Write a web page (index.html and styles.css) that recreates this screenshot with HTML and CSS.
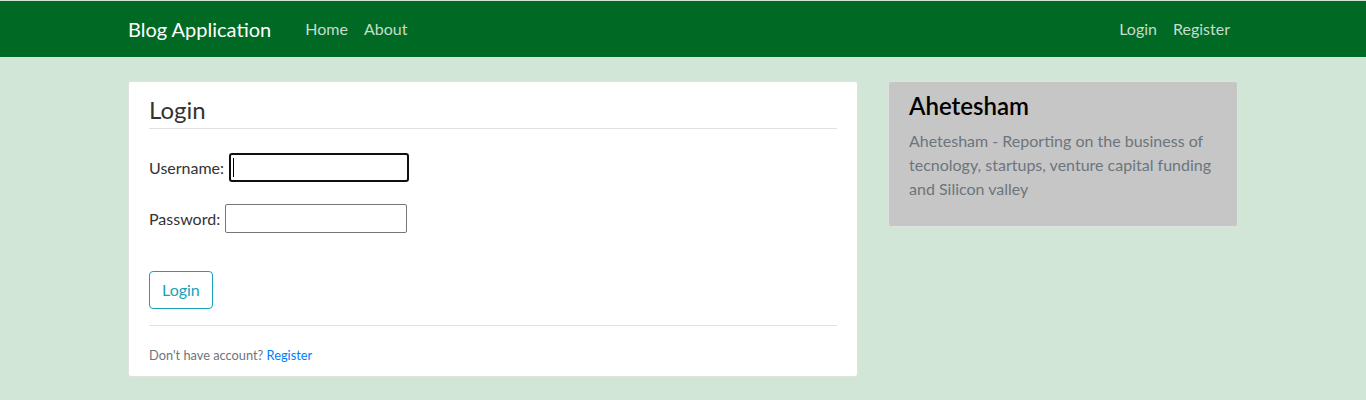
FILE: index.html
```html
<!DOCTYPE html>
<html lang="en">
<head>
<meta charset="utf-8">
<title>Blog Application - Login</title>
<link rel="stylesheet" href="styles.css">
</head>
<body>
<header class="site-header">
  <nav class="navbar">
    <div class="container nav-inner">
      <a class="brand" href="#">Blog Application</a>
      <div class="nav-left">
        <a class="nav-link" href="#">Home</a>
        <a class="nav-link" href="#">About</a>
      </div>
      <div class="nav-right">
        <a class="nav-link" href="#">Login</a>
        <a class="nav-link" href="#">Register</a>
      </div>
    </div>
  </nav>
</header>
<main class="container main">
  <div class="row">
    <div class="col-main">
      <div class="content-section">
        <form>
          <fieldset class="fieldset">
            <legend class="legend">Login</legend>
            <div class="form-group">
              <label class="label" for="username">Username:</label>
              <span class="input-wrap">
                <input class="input input-focus" id="username" type="text">
                <span class="caret"></span>
              </span>
            </div>
            <div class="form-group">
              <label class="label" for="password">Password:</label>
              <span class="input-wrap">
                <input class="input" id="password" type="password">
              </span>
            </div>
          </fieldset>
          <div class="btn-group">
            <button class="btn-outline" type="button">Login</button>
          </div>
        </form>
        <div class="footer-note">
          <small class="muted">Don't have account? <a class="link" href="#">Register</a></small>
        </div>
      </div>
    </div>
    <div class="col-side">
      <div class="sidebar">
        <h4 class="side-title">Ahetesham</h4>
        <p class="side-text">Ahetesham - Reporting on the business of tecnology, startups, venture capital funding and Silicon valley</p>
      </div>
    </div>
  </div>
</main>
</body>
</html>
```

FILE: styles.css
```css
* { box-sizing: border-box; }
html, body { margin: 0; padding: 0; }
body {
  background: #d1e6d7;
  color: #333333;
  font-family: Lato, "Open Sans", sans-serif;
  font-size: 16px;
  line-height: 1.5;
  padding-top: 1px;
}
.container {
  max-width: 1140px;
  margin: 0 auto;
  padding: 0 15px;
}
.navbar {
  background: #006923;
  height: 56px;
}
.nav-inner {
  display: flex;
  align-items: center;
  height: 56px;
}
.brand {
  color: #ffffff;
  font-size: 20px;
  text-decoration: none;
  margin-right: 26px;
  line-height: 30px;
}
.nav-left, .nav-right { display: flex; }
.nav-right { margin-left: auto; }
.nav-link {
  color: rgba(255, 255, 255, 0.78);
  text-decoration: none;
  padding: 8px;
  line-height: 24px;
}
.main { padding-top: 24px; }
.row {
  display: flex;
  margin: 0 -15px;
}
.col-main { width: 66.6667%; padding: 0 15px; }
.col-side { width: 33.3333%; padding: 0 15px; }
.content-section {
  background: #ffffff;
  border: 1px solid #dde3de;
  border-radius: 3px;
  padding: 10px 20px;
}
.fieldset {
  border: 0;
  margin: 0 0 16px;
  padding: 0;
  min-width: 0;
}
.legend {
  display: block;
  width: 100%;
  padding: 0;
  font-size: 24px;
  line-height: 36px;
  border-bottom: 1px solid #dee2e6;
  margin-bottom: 24px;
  color: #333333;
}
.form-group {
  display: flex;
  align-items: center;
  gap: 5px;
  height: 29px;
  margin-bottom: 22px;
}
.label { color: #333333; }
.input-wrap { position: relative; display: inline-block; height: 29px; }
.input {
  width: 182px;
  height: 29px;
  border: 1px solid #767676;
  border-radius: 2px;
  padding: 1px 2px;
  font: inherit;
  background: #ffffff;
}
.input-focus {
  width: 180px;
  border: 2px solid #101010;
  border-radius: 3px;
}
.caret {
  position: absolute;
  left: 4px;
  top: 5px;
  width: 1px;
  height: 19px;
  background: #000000;
}
.btn-group { margin-bottom: 16px; }
.btn-outline {
  font: inherit;
  color: #17a2b8;
  background: transparent;
  border: 1px solid #17a2b8;
  border-radius: 4px;
  padding: 6px 12px;
  line-height: 24px;
  height: 38px;
}
.footer-note {
  border-top: 1px solid #dee2e6;
  padding-top: 16px;
}
.muted { color: #6c757d; font-size: 12.8px; }
.link { color: #007bff; text-decoration: none; }
.sidebar {
  background: #c6c6c6;
  border: 1px solid #dde3de;
  border-radius: 3px;
  padding: 10px 20px;
  height: 146px;
}
.side-title {
  margin: 0 0 8px;
  font-size: 24px;
  font-weight: 600;
  line-height: 1.2;
  color: #000000;
}
.side-text {
  margin: 0;
  color: #6c757d;
}
```
